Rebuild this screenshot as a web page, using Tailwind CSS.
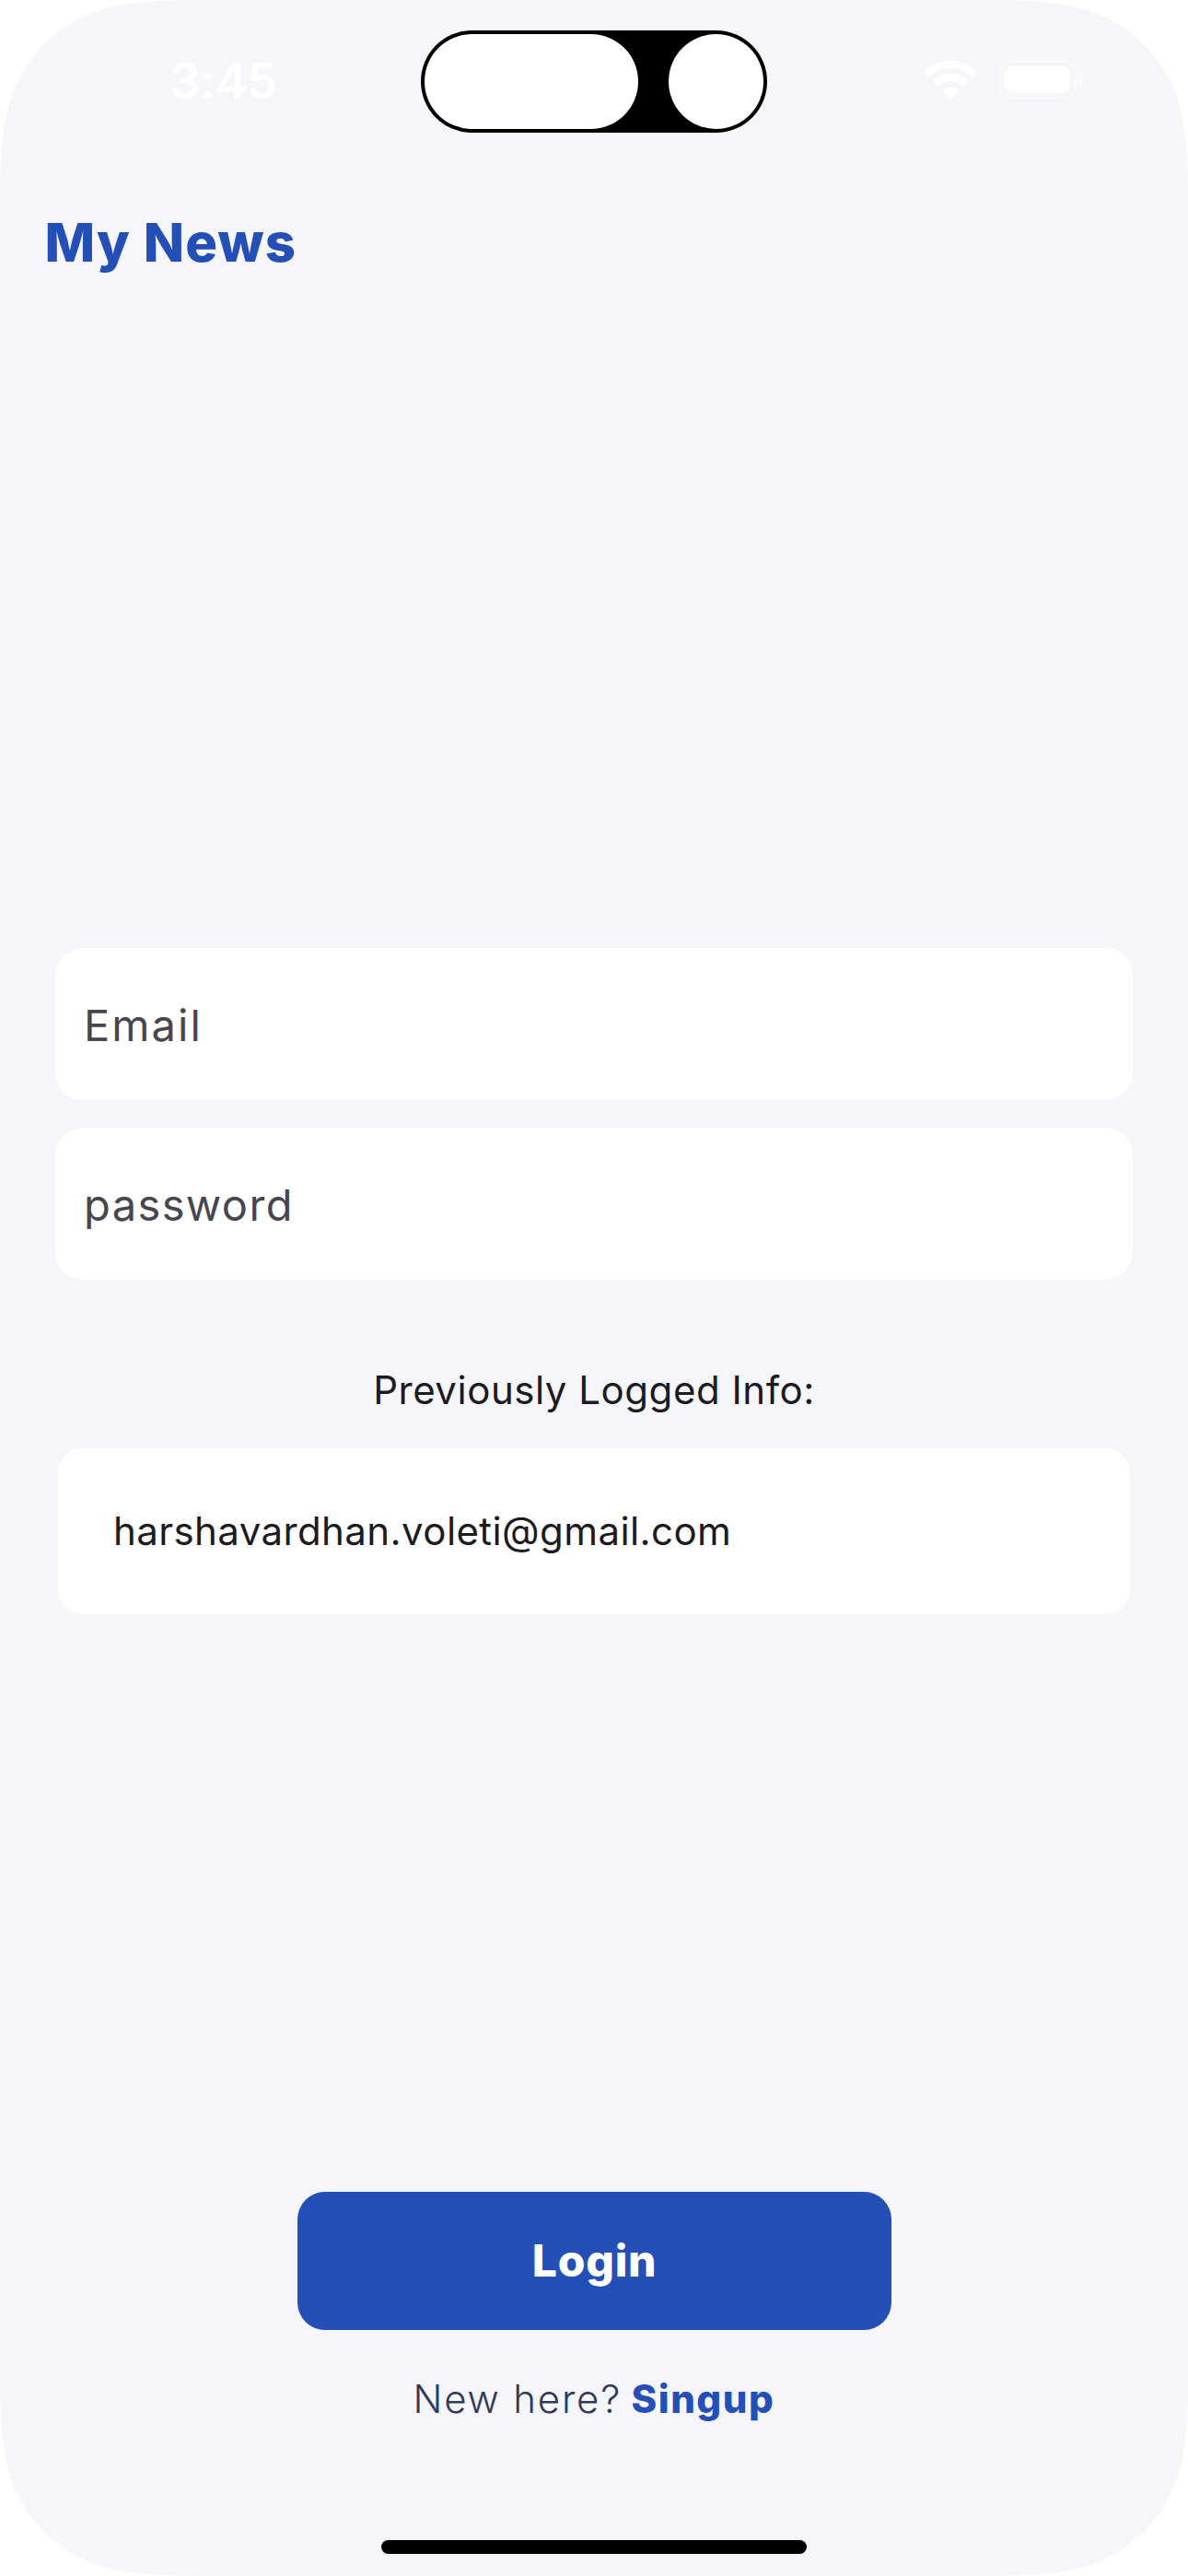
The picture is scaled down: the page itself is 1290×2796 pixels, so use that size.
<!DOCTYPE html>
<html lang="en">
<head>
<meta charset="utf-8">
<title>My News</title>
<script src="https://cdn.jsdelivr.net/npm/@tailwindcss/browser@4"></script>
</head>
<body class="bg-white">
<div class="relative isolate flex h-[2796px] w-[1290px] flex-col overflow-hidden font-['Inter',sans-serif]">
  <!-- Screen surface with continuous corners -->
  <svg class="absolute inset-0 -z-10" width="1290" height="2796" viewBox="0 0 1290 2796" fill="#f5f5fa" aria-hidden="true">
    <path d="M252 0H1038C1110.400 0 1146.700 0 1179.500 10.800L1185.800 12.400C1228.500 27.900 1262.100 61.500 1277.600 104.200C1290 143.300 1290 179.600 1290 252V2544C1290 2616.400 1290 2652.700 1277.600 2691.800C1262.100 2734.500 1228.500 2768.100 1185.800 2783.600C1146.700 2796 1110.400 2796 1038 2796H252C179.600 2796 143.300 2796 104.200 2783.600C61.500 2768.100 27.900 2734.500 12.400 2691.800C0 2652.700 0 2616.400 0 2544V252C0 179.600 0 143.300 12.400 104.200C27.900 61.500 61.500 27.900 104.200 12.400C143.300 0 179.600 0 252 0Z"/>
  </svg>

  <!-- Status bar -->
  <header class="flex h-[177px] items-start text-white">
    <time class="w-[457px] pt-[56px] pl-[184px] text-[53px] leading-[64px] font-semibold tracking-[-0.6px]">3:45</time>
    <div class="mt-[33px] flex h-[111px] w-[376px] justify-between rounded-full bg-black p-[4px]">
      <div class="w-[232px] rounded-full bg-white"></div>
      <div class="w-[103px] rounded-full bg-white"></div>
    </div>
    <svg class="mt-[60px] ml-[77px]" width="280" height="54" viewBox="910 60 280 54" fill="none" aria-hidden="true">
      <g fill="#fff" fill-opacity=".22">
        <circle cx="921.500" cy="101" r="5.500"/><circle cx="939.500" cy="101" r="5.500"/><circle cx="957.300" cy="101" r="5.500"/><circle cx="975.300" cy="101" r="5.500"/>
      </g>
      <g stroke="#fff" stroke-width="8.300">
        <path d="M1006 80.700A37.200 37.200 0 0 1 1058.600 80.700"/>
        <path d="M1016 90.700A23 23 0 0 1 1048.600 90.700"/>
      </g>
      <path fill="#fff" d="M1031.300 106.500L1024 99.200Q1023 98.200 1024.100 97.200A13 13 0 0 1 1040.500 97.200Q1041.600 98.200 1040.600 99.200L1033.300 106.500Q1032.300 107.400 1031.300 106.500Z"/>
      <rect x="1085.700" y="66.500" width="82.500" height="40" rx="14" stroke="#fff" stroke-opacity=".4" stroke-width="3.500"/>
      <rect x="1091" y="72" width="71" height="29" rx="9" fill="#fff"/>
      <path d="M1172 79.500C1178.900 82.300 1178.900 91.200 1172 94Z" fill="#fff" fill-opacity=".5"/>
    </svg>
  </header>

  <h1 class="mt-[50px] pl-[48.500px] text-[58px] leading-[72px] font-extrabold tracking-[1.100px] text-[#244fb7]">My News</h1>

  <main class="mt-[730px] flex flex-col">
    <div class="mx-[60px] flex flex-col gap-[30px] text-[47px] leading-[60px] text-[#49454f]">
      <div class="flex h-[165px] items-center rounded-[30px] bg-white pt-[3px] pl-[31px] tracking-[2.100px]">Email</div>
      <div class="flex h-[165px] items-center rounded-[30px] bg-white pt-[3px] pl-[31px] tracking-[1.400px]">password</div>
    </div>
    <p class="mt-[90px] text-center text-[42px] leading-[60px] tracking-[0.530px] text-[#1c1b1f]">Previously Logged Info:</p>
    <div class="mx-[63px] mt-[33px] flex h-[180px] items-center rounded-[27px] bg-white pl-[60px] text-[42px] leading-[60px] tracking-[0.410px] text-[#1c1b1f]">harshavardhan.voleti@gmail.com</div>
  </main>

  <footer class="mt-[627px] flex flex-col items-center">
    <button class="flex h-[150px] w-[645px] items-center justify-center rounded-[30px] bg-[#244fb7] pl-px text-[48px] leading-[60px] font-extrabold tracking-[0.800px] text-white">Login</button>
    <p class="mt-[45px] flex w-full items-baseline gap-[10.500px] pl-[448.500px] text-[42px] leading-[60px]">
      <span class="font-light tracking-[1.800px] text-[#303a5c]">New here?</span>
      <a class="font-extrabold tracking-[1.500px] text-[#244fb7]">Singup</a>
    </p>
    <div class="mt-[123px] h-[15px] w-[462px] rounded-full bg-black"></div>
  </footer>
</div>
</body>
</html>
